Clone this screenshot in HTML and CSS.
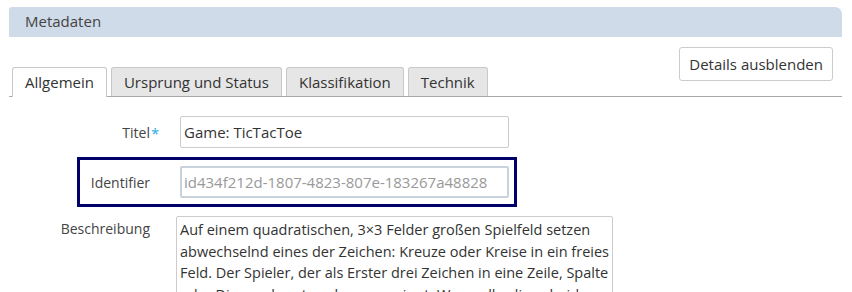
FILE: index.html
```html
<!DOCTYPE html>
<html lang="de">
<head>
<meta charset="utf-8">
<title>Metadaten</title>
<link rel="stylesheet" href="styles.css">
</head>
<body>
<div class="panel">
  <div class="panel-head">Metadaten</div>
  <div class="tabbar">
    <ul class="tabs">
      <li class="tab active">Allgemein</li>
      <li class="tab">Ursprung und Status</li>
      <li class="tab">Klassifikation</li>
      <li class="tab">Technik</li>
    </ul>
    <button class="btn" type="button">Details ausblenden</button>
  </div>
  <div class="form">
    <div class="row row-title">
      <label class="lbl">Titel<span class="req">*</span></label>
      <input class="field" type="text" value="Game: TicTacToe">
    </div>
    <div class="row row-id">
      <label class="lbl">Identifier</label>
      <input class="field field-ro" type="text" value="id434f212d-1807-4823-807e-183267a48828" readonly>
    </div>
    <div class="row row-desc">
      <label class="lbl">Beschreibung</label>
      <div class="area">Auf einem quadratischen, 3×3 Felder großen Spielfeld setzen<br>abwechselnd eines der Zeichen: Kreuze oder Kreise in ein freies<br>Feld. Der Spieler, der als Erster drei Zeichen in eine Zeile, Spalte<br>oder Diagonale setzen kann, gewinnt. Wenn allerdings beide</div>
    </div>
  </div>
</div>
</body>
</html>
```

FILE: styles.css
```css
html, body {
  margin: 0;
  padding: 0;
  background: #fff;
  font-family: "Open Sans", "Noto Sans", sans-serif;
  font-size: 15px;
  color: #333;
}

body {
  height: 292px;
  overflow: hidden;
}

.panel {
  margin: 7px 10px 0 9px;
  width: 833px;
}

.panel-head {
  height: 30px;
  line-height: 29px;
  background: #cfdbe8;
  border-radius: 3px 7px 0 0;
  padding-left: 16px;
  color: #444;
}

.tabbar {
  display: flex;
  justify-content: space-between;
  align-items: flex-start;
  margin-top: 10px;
  height: 49px;
  border-bottom: 1px solid #aaa;
}

.tabs {
  list-style: none;
  margin: 20px 0 0 3px;
  padding: 0;
  display: flex;
  gap: 4px;
}

.tab {
  height: 28px;
  line-height: 28px;
  padding: 0 12px;
  background: #e6e6e6;
  border: 1px solid #c8c8c8;
  border-bottom: none;
  border-radius: 3px 3px 0 0;
  color: #333;
}

.tab.active {
  background: #fff;
  height: 29px;
}

.btn {
  margin-right: 9px;
  height: 34px;
  padding: 0 9px;
  background: #fff;
  border: 1px solid #ccc;
  border-radius: 3px;
  font-family: inherit;
  font-size: 15px;
  color: #333;
}

.form {
  display: flex;
  flex-direction: column;
}

.row {
  display: flex;
  align-items: center;
}

.lbl {
  width: 141px;
  flex: none;
  text-align: right;
  position: relative;
  font-size: 14px;
  color: #444;
}

.req {
  position: absolute;
  left: 100%;
  margin-left: 1px;
  font-size: 15px;
  color: #29abe2;
}

.field {
  margin-left: 30px;
  width: 329px;
  height: 32px;
  box-sizing: border-box;
  border: 1px solid #ccc;
  border-radius: 2px;
  padding: 0 3px;
  font-family: inherit;
  font-size: 15px;
  color: #333;
  background: #fff;
  outline: none;
}

.row-title {
  margin-top: 19px;
}

.row-id {
  margin: 9px 0 0 68px;
  width: 440px;
  box-sizing: border-box;
  height: 50px;
  border: 3px solid #00006a;
}

.row-id .lbl {
  width: 70px;
}

.field-ro {
  border: 2px solid #c7d2dd;
  color: #999;
  padding: 0 2px;
}

.row-desc {
  margin-top: 9px;
  align-items: flex-start;
}

.row-desc .lbl {
  padding-top: 3px;
}

.area {
  margin-left: 26px;
  width: 437px;
  box-sizing: border-box;
  height: 120px;
  border: 1px solid #ccc;
  border-radius: 2px;
  padding: 2px 3px 1px;
  font-size: 14.5px;
  line-height: 21.5px;
  white-space: nowrap;
  overflow: hidden;
}
```
